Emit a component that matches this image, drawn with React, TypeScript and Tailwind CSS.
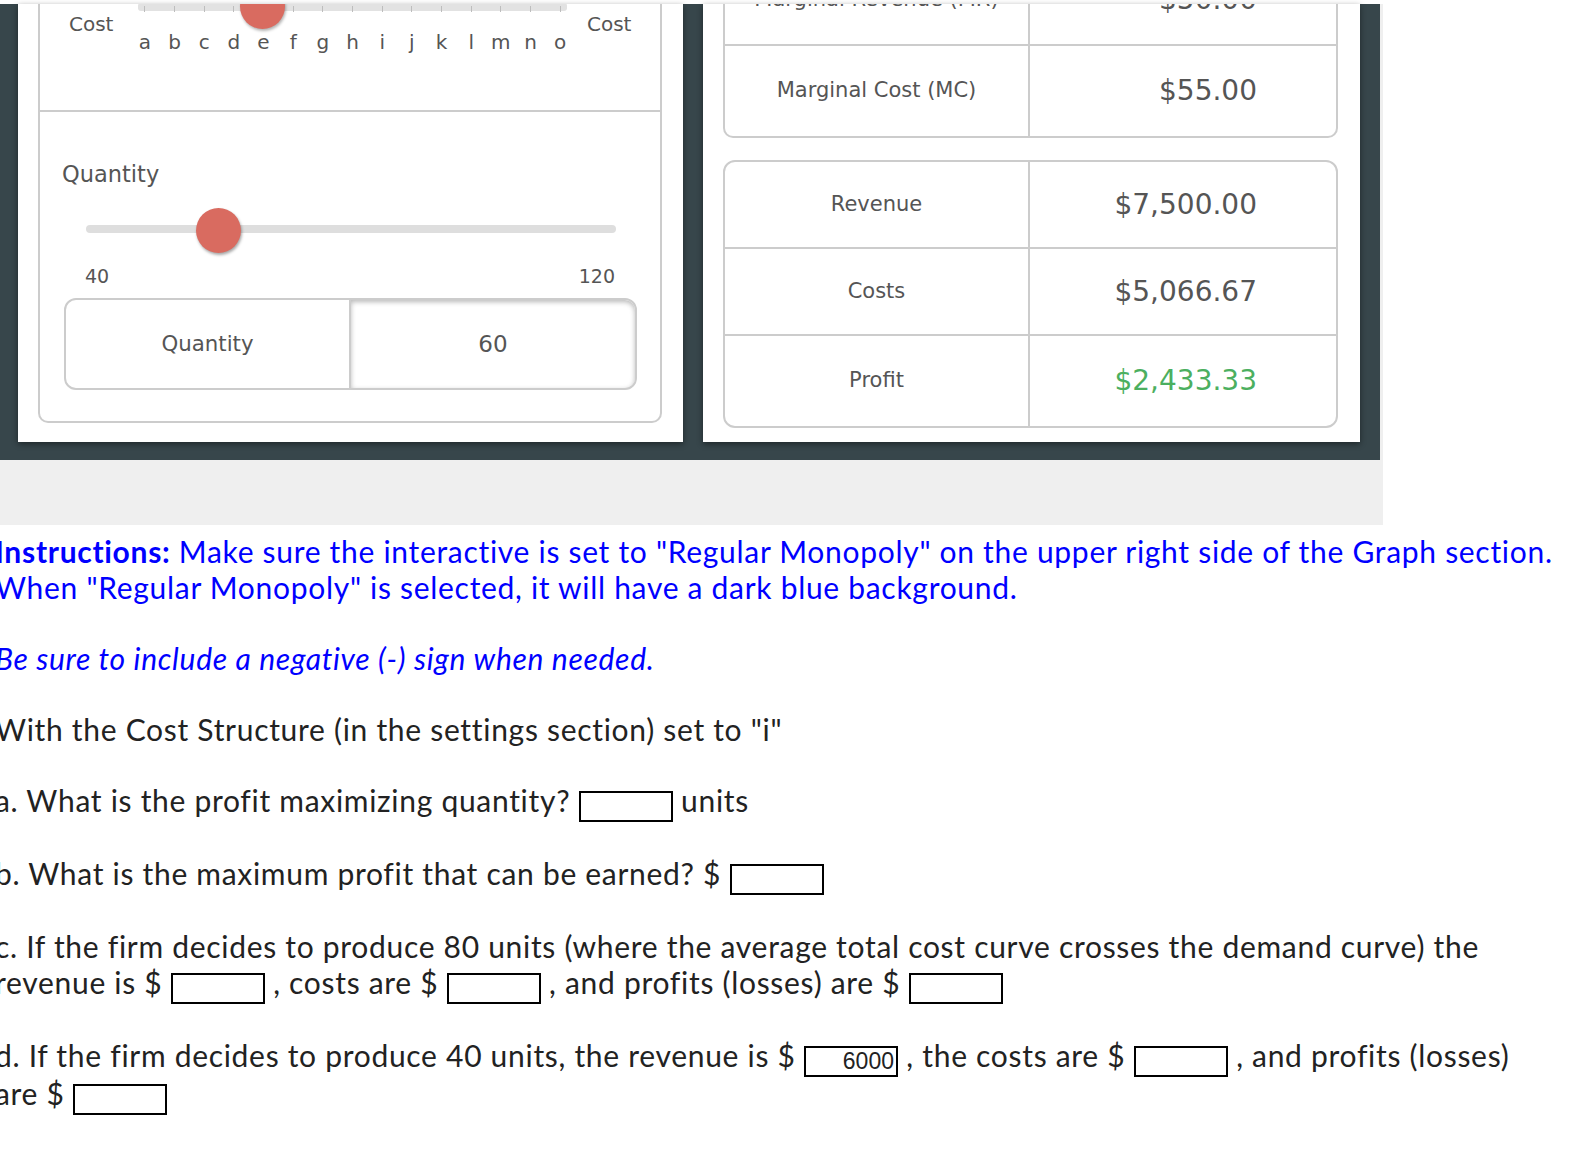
import React from "react";

const letters = ["a","b","c","d","e","f","g","h","i","j","k","l","m","n","o"];

function Box({ value }: { value?: string }) {
  return (
    <span className="inline-block align-middle w-[94px] h-[31px] border-2 border-black bg-white text-right pr-[2px] font-['Liberation_Sans',sans-serif] text-[23px] tracking-normal leading-[27px] text-[#222] relative top-[2px]">
      {value}
    </span>
  );
}

function Row({ label, value, green, h }: { label: string; value: string; green?: boolean; h: string }) {
  return (
    <div className={`flex ${h}`}>
      <div className="w-[305px] border-r-2 border-[#ccc] flex items-center justify-center text-[21px] text-[#555]">
        {label}
      </div>
      <div className={`flex-1 flex items-center justify-end pr-[79px] text-[28px] ${green ? "text-[#4caf5f]" : "text-[#555]"}`}>
        {value}
      </div>
    </div>
  );
}

export default function App() {
  return (
    <div className="w-[1580px] min-h-[1156px] bg-white overflow-hidden">
      <div className="h-[4px]" />
      <div className="w-[1383px] bg-[#efefef] pb-[65px]">
        <div className="w-[1380px] h-[456px] bg-[#37464b] pl-[18px] pb-[18px] flex gap-[20px] font-['DejaVu_Sans',sans-serif]">
          {/* Left panel */}
          <div className="w-[665px] h-full bg-white shadow-[0_2px_6px_rgba(0,0,0,0.45)] overflow-hidden flex flex-col justify-end pl-[20px] pr-[21px] pb-[19px]">
            <div className="border-2 border-t-0 border-[#ccc] rounded-b-[10px] shrink-0">
              {/* Upper section */}
              <div className="h-[128px] flex">
                <div className="w-[90px] pl-[29px] pt-[30px] text-[20px] leading-[24px] text-[#555]">Cost</div>
                <div className="w-[445px] relative pt-[21px]">
                  <div className="mx-[8px] h-[8px] bg-[#e2e2e2] rounded-[3px]" />
                  <div className="grid grid-cols-15 mt-[-5px] h-[6px]">
                    {letters.map((l) => (
                      <div key={l} className="flex justify-center">
                        <div className="w-[1px] h-[6px] bg-[#bdbdbd]" />
                      </div>
                    ))}
                  </div>
                  <div className="grid grid-cols-15 mt-[18px] text-[20px] leading-[24px] text-[#555]">
                    {letters.map((l) => (
                      <div key={l} className="text-center">{l}</div>
                    ))}
                  </div>
                  <div className="absolute left-[110px] top-[2px] w-[45px] h-[45px] rounded-full bg-[#d96b60] shadow-[1px_2px_3px_rgba(0,0,0,0.3)]" />
                </div>
                <div className="pl-[12px] pt-[30px] text-[20px] leading-[24px] text-[#555]">Cost</div>
              </div>
              {/* Lower section */}
              <div className="border-t-2 border-[#ccc] pt-[49px] pb-[31px]">
                <div className="pl-[22px] text-[22.5px] leading-[26px] text-[#555]">Quantity</div>
                <div className="relative h-[45px] mt-[21px] ml-[46px] mr-[44px] pt-[17px]">
                  <div className="h-[8px] rounded-full bg-[#dedede]" />
                  <div className="absolute left-[110px] top-0 w-[45px] h-[45px] rounded-full bg-[#d96b60] shadow-[1px_2px_3px_rgba(0,0,0,0.35)]" />
                </div>
                <div className="mt-[12px] flex justify-between pl-[45px] pr-[45px] text-[19px] leading-[22px] text-[#555]">
                  <span>40</span>
                  <span>120</span>
                </div>
                <div className="mt-[11px] ml-[24px] mr-[23px] h-[92px] border-2 border-[#ccc] rounded-[12px] flex overflow-hidden">
                  <div className="w-[283px] flex items-center justify-center text-[21.3px] text-[#555]">Quantity</div>
                  <div className="flex-1 border-l-2 border-[#ccc] rounded-r-[10px] shadow-[inset_0_2px_5px_rgba(0,0,0,0.28)] flex items-center justify-center text-[23px] text-[#555]">
                    60
                  </div>
                </div>
              </div>
            </div>
          </div>
          {/* Right panel */}
          <div className="w-[657px] h-full bg-white shadow-[0_2px_6px_rgba(0,0,0,0.45)] overflow-hidden flex flex-col justify-end pl-[20px] pr-[22px] pb-[14px]">
            <div className="border-2 border-t-0 border-[#ccc] rounded-b-[10px] shrink-0">
              <div className="border-b-2 border-[#ccc]">
                <Row label="Marginal Revenue (MR)" value="$50.00" h="h-[88px]" />
              </div>
              <Row label="Marginal Cost (MC)" value="$55.00" h="h-[90px]" />
            </div>
            <div className="mt-[22px] border-2 border-[#ccc] rounded-[12px] shrink-0 overflow-hidden">
              <div className="border-b-2 border-[#ccc]">
                <Row label="Revenue" value="$7,500.00" h="h-[85px]" />
              </div>
              <div className="border-b-2 border-[#ccc]">
                <Row label="Costs" value="$5,066.67" h="h-[85px]" />
              </div>
              <Row label="Profit" value="$2,433.33" green h="h-[90px]" />
            </div>
          </div>
        </div>
      </div>

      {/* Text section */}
      <div className="mt-[8px] ml-[-5px] font-['Lato',sans-serif] text-[30px] tracking-[0.7px] leading-[36px] text-[#222] whitespace-nowrap">
        <p className="text-[#0000ff] mb-[35px]">
          <b>Instructions:</b> Make sure the interactive is set to "Regular Monopoly" on the upper right side of the Graph section.
          <br />
          When "Regular Monopoly" is selected, it will have a dark blue background.
        </p>
        <p className="text-[#0000ff] italic mb-[35px]">Be sure to include a negative (-) sign when needed.</p>
        <p className="mb-[35px]">With the Cost Structure (in the settings section) set to "i"</p>
        <p className="mb-[35px]">
          a. What is the profit maximizing quantity? <Box /> units
        </p>
        <p className="mb-[35px]">
          b. What is the maximum profit that can be earned? $ <Box />
        </p>
        <p className="mb-[35px]">
          c. If the firm decides to produce 80 units (where the average total cost curve crosses the demand curve) the
          <br />
          revenue is $ <Box /> , costs are $ <Box /> , and profits (losses) are $ <Box />
        </p>
        <p>
          d. If the firm decides to produce 40 units, the revenue is $ <Box value="6000" /> , the costs are $ <Box /> , and profits (losses)
          <br />
          are $ <Box />
        </p>
      </div>
    </div>
  );
}
